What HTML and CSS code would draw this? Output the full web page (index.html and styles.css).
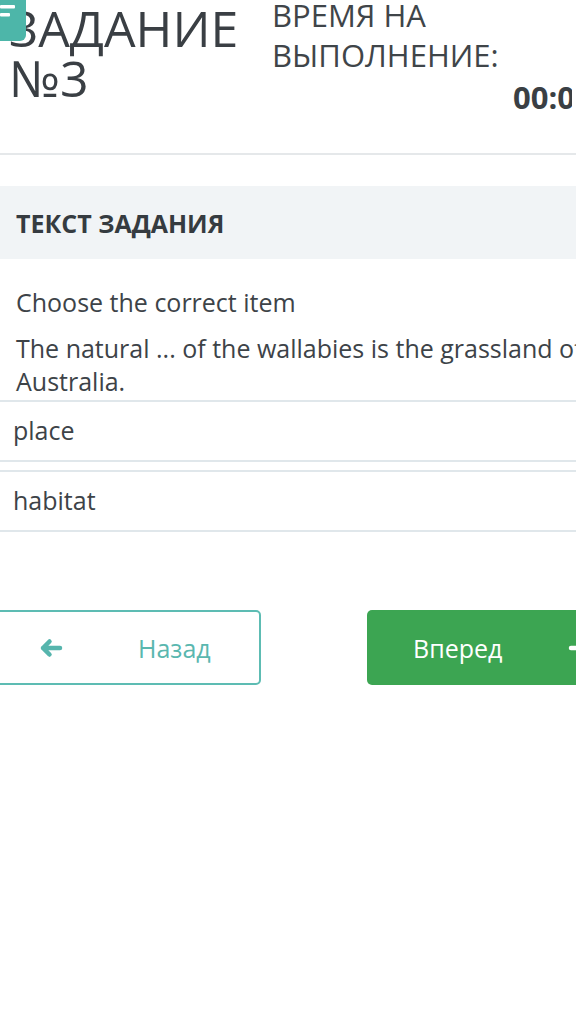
FILE: index.html
```html
<!DOCTYPE html>
<html lang="ru">
<head>
<meta charset="utf-8">
<link rel="stylesheet" href="styles.css">
</head>
<body>
<div class="page">
  <div class="badge">
    <svg width="26" height="41" viewBox="0 0 26 41">
      <rect x="-10" y="-10" width="36" height="51" rx="6" fill="#4db6a9"/>
      <rect x="0" y="5" width="15" height="3.5" rx="1" fill="#fff"/>
      <rect x="0" y="13" width="10" height="3.5" rx="1" fill="#fff"/>
    </svg>
  </div>
  <header class="header">
    <h1 class="title">ЗАДАНИЕ №3</h1>
    <div class="timer">
      <div class="timer-label">ВРЕМЯ НА ВЫПОЛНЕНИЕ:</div>
      <div class="timer-value">00:00</div>
    </div>
  </header>
  <div class="divider"></div>
  <div class="section-head">ТЕКСТ ЗАДАНИЯ</div>
  <div class="question">
    <p class="q-line">Choose the correct item</p>
    <p class="q-line q-text">The natural ... of the wallabies is the grassland of Australia.</p>
  </div>
  <div class="options">
    <div class="option">place</div>
    <div class="option">habitat</div>
  </div>
  <div class="nav">
    <button class="btn btn-back">
      <svg class="arrow" width="25" height="20" viewBox="0 0 25 20">
        <path d="M22 10H5 M11.5 3.5L5 10l6.5 6.5" fill="none" stroke="#56b5ad" stroke-width="4.5" stroke-linecap="round" stroke-linejoin="round"/>
      </svg>
      <span class="btn-text">Назад</span>
    </button>
    <button class="btn btn-next">
      <span class="btn-text">Вперед</span>
      <svg class="arrow" width="25" height="20" viewBox="0 0 25 20">
        <path d="M3 10H20 M13.5 3.5L20 10l-6.5 6.5" fill="none" stroke="#fff" stroke-width="4.5" stroke-linecap="round" stroke-linejoin="round"/>
      </svg>
    </button>
  </div>
</div>
</body>
</html>
```
FILE: styles.css
```css
html, body {
  margin: 0;
  padding: 0;
  background: #fff;
}
body {
  width: 576px;
  height: 1028px;
  overflow: hidden;
  font-family: "Open Sans", "Noto Sans", sans-serif;
  color: #3d4348;
}
.page {
  position: relative;
  width: 660px;
}
.badge {
  position: absolute;
  top: 0;
  left: 0;
  width: 26px;
  height: 41px;
  z-index: 2;
}
.badge svg {
  display: block;
}
.header {
  display: flex;
  height: 153px;
  padding-top: 3px;
  box-sizing: border-box;
}
.title {
  margin: 0;
  width: 272px;
  flex: none;
  padding-left: 9px;
  box-sizing: border-box;
  font-size: 50px;
  line-height: 50px;
  font-weight: 400;
  color: #3a3f44;
}
.timer {
  margin-top: -8px;
  font-size: 31px;
  line-height: 40px;
  color: #3f4549;
  width: 388px;
}
.timer-label {
  width: 300px;
}
.timer-value {
  margin-top: 2px;
  padding-left: 241px;
  width: 300px;
  box-sizing: border-box;
  overflow: hidden;
  font-size: 31px;
  font-weight: 700;
  white-space: nowrap;
  color: #3a3f44;
}
.divider {
  height: 2px;
  background: #e5e8ea;
}
.section-head {
  margin-top: 31px;
  height: 73px;
  background: #f1f4f6;
  padding-left: 16px;
  display: flex;
  align-items: center;
  font-size: 25px;
  font-weight: 700;
  color: #353b40;
}
.question {
  padding: 27px 16px 0;
  width: 640px;
  box-sizing: border-box;
}
.q-line {
  margin: 0;
  font-size: 25px;
  line-height: 33px;
  white-space: nowrap;
}
.q-text {
  margin-top: 13px;
  white-space: normal;
  width: 600px;
}
.options {
  margin-top: 2px;
  display: flex;
  flex-direction: column;
  gap: 8px;
}
.option {
  height: 58px;
  line-height: 56px;
  border-top: 2px solid #e0e7eb;
  border-bottom: 2px solid #e0e7eb;
  padding-left: 13px;
  font-size: 25px;
  color: #3d4348;
}
.nav {
  margin-top: 78px;
  display: flex;
  gap: 106px;
}
.btn {
  height: 75px;
  box-sizing: border-box;
  border-radius: 5px;
  display: flex;
  align-items: center;
  font-family: "Open Sans", "Noto Sans", sans-serif;
  font-size: 25px;
  padding: 0;
  flex: none;
}
.btn-back {
  margin-left: -30px;
  width: 291px;
  border: 2px solid #5dbcb3;
  background: #fff;
  color: #5ab7af;
  padding-left: 66px;
}
.btn-back .btn-text {
  margin-left: 75px;
}
.btn-next {
  width: 260px;
  border: none;
  background: #3ca552;
  color: #fff;
  padding-left: 46px;
}
.btn-next .arrow {
  margin-left: 66px;
}
.arrow {
  display: block;
  flex: none;
}
```
